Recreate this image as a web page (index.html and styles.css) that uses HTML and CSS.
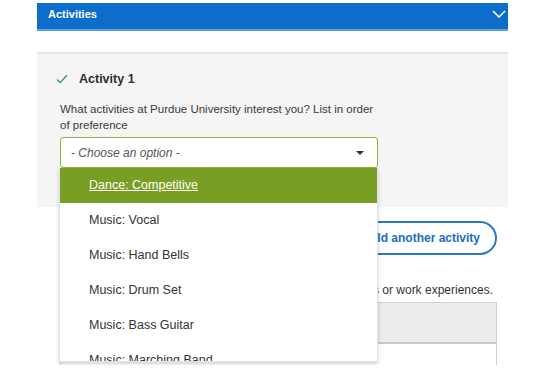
FILE: index.html
```html
<!DOCTYPE html>
<html lang="en">
<head>
    <meta charset="UTF-8">
    <meta name="viewport" content="width=device-width, initial-scale=1.0">
    <title>Activities</title>
    <link rel="stylesheet" href="styles.css">
</head>
<body>
    <div class="page">
        <div class="section-bar">
            <span class="section-title">Activities</span>
            <svg class="chevron" width="14" height="8" viewBox="0 0 14 8">
                <path d="M1 1 L7 7 L13 1" fill="none" stroke="#fff" stroke-width="1.6"/>
            </svg>
        </div>

        <div class="panel">
            <h3 class="activity-title">
                <svg class="check" width="12" height="10" viewBox="0 0 12 10">
                    <path d="M1 5.5 L4.2 8.6 L11 1.2" fill="none" stroke="#3c9a4c" stroke-width="1.4"/>
                </svg>
                Activity 1
            </h3>
            <p class="question">What activities at Purdue University interest you? List in order of preference</p>

            <div class="select-wrap">
                <div class="select">
                    <span class="placeholder">- Choose an option -</span>
                    <span class="arrow"></span>
                </div>
                <ul class="listbox">
                    <li class="option active">Dance: Competitive</li>
                    <li class="option">Music: Vocal</li>
                    <li class="option">Music: Hand Bells</li>
                    <li class="option">Music: Drum Set</li>
                    <li class="option">Music: Bass Guitar</li>
                    <li class="option">Music: Marching Band</li>
                </ul>
            </div>
        </div>

        <div class="content">
            <div class="button-row">
                <button class="add-button">Add another activity</button>
            </div>
            <p class="hint">Tell us about your clubs, organizations or work experiences.</p>
            <div class="editor">
                <div class="editor-toolbar"></div>
                <div class="editor-body"></div>
            </div>
        </div>
    </div>
</body>
</html>
```

FILE: styles.css
```css
body {
    margin: 0;
    font-family: "Liberation Sans", Arial, sans-serif;
    color: #333;
    background: #fff;
}

.page {
    padding: 3px 41px 0 37px;
}

.section-bar {
    height: 22px;
    background: #0c6dca;
    border-bottom: 2px solid #5d9fe0;
    display: flex;
    align-items: center;
    justify-content: space-between;
    padding: 0 2px 4px 11px;
    box-sizing: content-box;
}

.section-title {
    color: #fff;
    font-size: 11px;
    font-weight: bold;
}

.chevron {
    display: block;
}

.panel {
    margin-top: 21px;
    background: #f5f5f5;
    border-top: 2px solid #e6e6e6;
    padding: 17px 11px 39px 23px;
}

.activity-title {
    margin: 0 0 0 -4px;
    display: flex;
    align-items: center;
    gap: 11px;
    font-size: 12.5px;
    font-weight: bold;
    line-height: 16px;
    color: #2e2e2e;
}

.check {
    display: block;
}

.question {
    margin: 14px 0 4px;
    max-width: 318px;
    font-size: 11.5px;
    line-height: 16px;
    color: #3a3a3a;
}

.select-wrap {
    position: relative;
    width: 318px;
}

.select {
    height: 29px;
    border: 1px solid #8db33a;
    border-radius: 3px;
    background: #fff;
    display: flex;
    align-items: center;
    justify-content: space-between;
    padding: 0 13px 0 10px;
}

.placeholder {
    font-size: 12px;
    font-style: italic;
    color: #555;
}

.arrow {
    width: 0;
    height: 0;
    border-left: 4px solid transparent;
    border-right: 4px solid transparent;
    border-top: 4px solid #333;
}

.listbox {
    position: absolute;
    top: 31px;
    left: -1px;
    width: 319px;
    height: 194px;
    margin: 0;
    padding: 0;
    list-style: none;
    background: #fff;
    border: 1px solid #e2e2e2;
    border-top: none;
    box-sizing: border-box;
    overflow: hidden;
    box-shadow: 0 2px 4px rgba(0, 0, 0, 0.18);
}

.option {
    height: 35px;
    line-height: 35px;
    padding-left: 29px;
    font-size: 12.5px;
    color: #333;
}

.option.active {
    background: #789e23;
    color: #fff;
    text-decoration: underline;
}

.content {
    padding: 0 11px 0 23px;
}

.button-row {
    display: flex;
    justify-content: flex-end;
    margin-top: 14px;
}

.add-button {
    height: 34px;
    padding: 0 15px;
    border: 2px solid #2b78c9;
    border-radius: 17px;
    background: #fff;
    color: #1d6cc2;
    font-family: inherit;
    font-size: 12px;
    font-weight: bold;
}

.hint {
    margin: 28px 4px 5px 0;
    text-align: right;
    font-size: 12px;
    line-height: 14px;
    color: #333;
}

.editor {
    border: 1px solid #cfcfcf;
    border-bottom: none;
}

.editor-toolbar {
    height: 39px;
    background: #ececec;
    border-bottom: 2px solid #c9c9c9;
}

.editor-body {
    height: 21px;
    background: #fff;
}
```
